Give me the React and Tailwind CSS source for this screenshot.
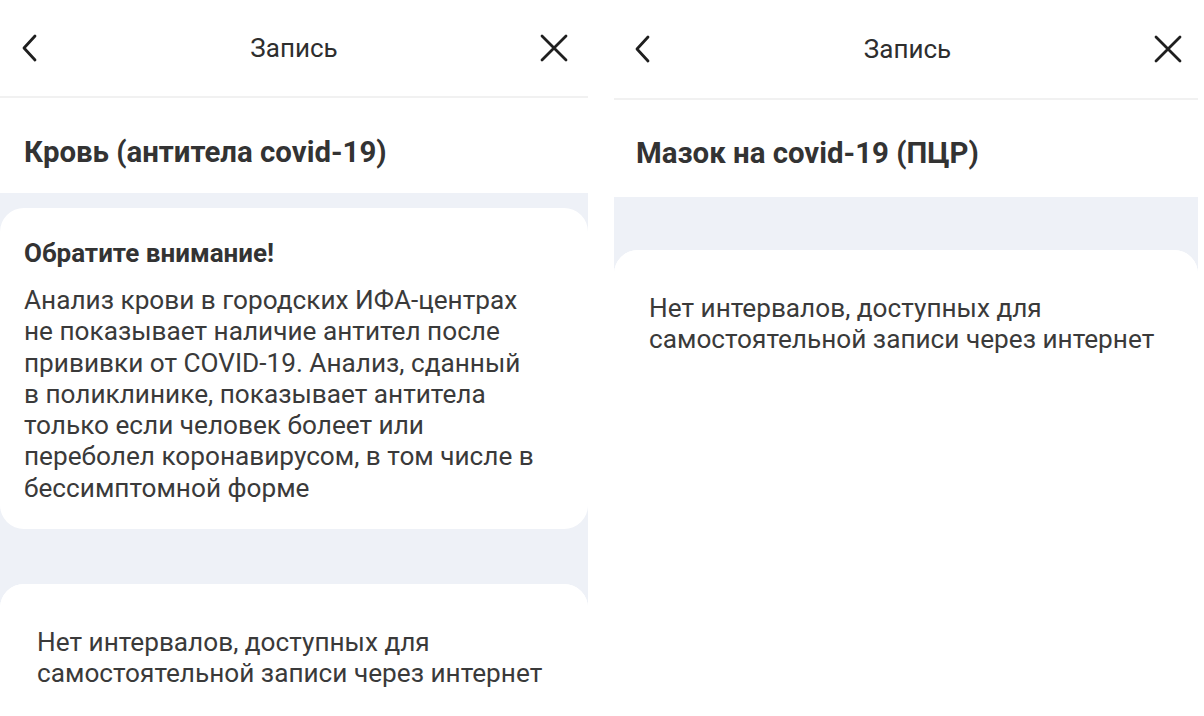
import React from 'react'

const font = { fontFamily: 'Roboto, "Noto Sans", sans-serif' }

const Back = () => (
  <svg width="18" height="28" viewBox="0 0 18 28" fill="none" stroke="#1f1f1f" strokeWidth="2.8" strokeLinecap="round" strokeLinejoin="round">
    <path d="M15 2 L4 14 L15 26" />
  </svg>
)

const Close = () => (
  <svg width="28" height="28" viewBox="0 0 28 28" fill="none" stroke="#1f1f1f" strokeWidth="2.8" strokeLinecap="round">
    <path d="M2 2 L26 26 M26 2 L2 26" />
  </svg>
)

const Header = ({ pad, h }) => (
  <div className={`grid grid-cols-[1fr_auto_1fr] items-center border-b-2 border-[#f1f1f1] ${h} ${pad}`}>
    <div className="flex"><Back /></div>
    <div className="text-[26px] text-[#2e2e2e]">Запись</div>
    <div className="flex justify-end"><Close /></div>
  </div>
)

const NoSlots = ({ pad }) => (
  <div className={`bg-white rounded-t-[24px] pt-[43px] text-[26.2px] leading-[31px] text-[#3a3a3a] ${pad}`}>
    Нет интервалов, доступных для<br />
    самостоятельной записи через интернет
  </div>
)

const LeftPanel = () => (
  <div className="w-[588px] flex flex-col bg-[#eef1f7]">
    <div className="bg-white">
      <Header h="h-[98px]" pad="pl-[20px] pr-[20px]" />
      <div className="h-[95px] pt-[37px] px-6 text-[29.4px] leading-[34px] font-bold text-[#333]">
        Кровь (антитела covid-19)
      </div>
    </div>
    <div className="h-[15px]" />
    <div className="bg-white rounded-[24px] px-6 pt-[30px] pb-[25px] text-[#3a3a3a]">
      <div className="text-[26px] font-bold text-[#333] leading-[30px]">Обратите внимание!</div>
      <p className="mt-[17px] text-[26.2px] leading-[31.3px]">
        Анализ крови в городских ИФА-центрах<br />
        не показывает наличие антител после<br />
        прививки от COVID-19. Анализ, сданный<br />
        в поликлинике, показывает антитела<br />
        только если человек болеет или<br />
        переболел коронавирусом, в том числе в<br />
        бессимптомной форме
      </p>
    </div>
    <div className="h-[55px]" />
    <div className="flex-1 bg-white rounded-t-[24px]">
      <NoSlots pad="px-[37px]" />
    </div>
  </div>
)

const RightPanel = () => (
  <div className="w-[584px] flex flex-col bg-[#eef1f7]">
    <div className="bg-white">
      <Header h="h-[100px]" pad="pl-[19px] pr-[16px]" />
      <div className="h-[97px] pt-[36px] px-[22px] text-[29.4px] leading-[34px] font-bold text-[#333]">
        Мазок на covid-19 (ПЦР)
      </div>
    </div>
    <div className="h-[53px]" />
    <div className="flex-1 bg-white rounded-t-[24px]">
      <NoSlots pad="px-[35px]" />
    </div>
  </div>
)

export default function App() {
  return (
    <div className="w-[1204px] h-[716px] overflow-hidden bg-white flex" style={font}>
      <LeftPanel />
      <div className="w-[26px]" />
      <RightPanel />
    </div>
  )
}
